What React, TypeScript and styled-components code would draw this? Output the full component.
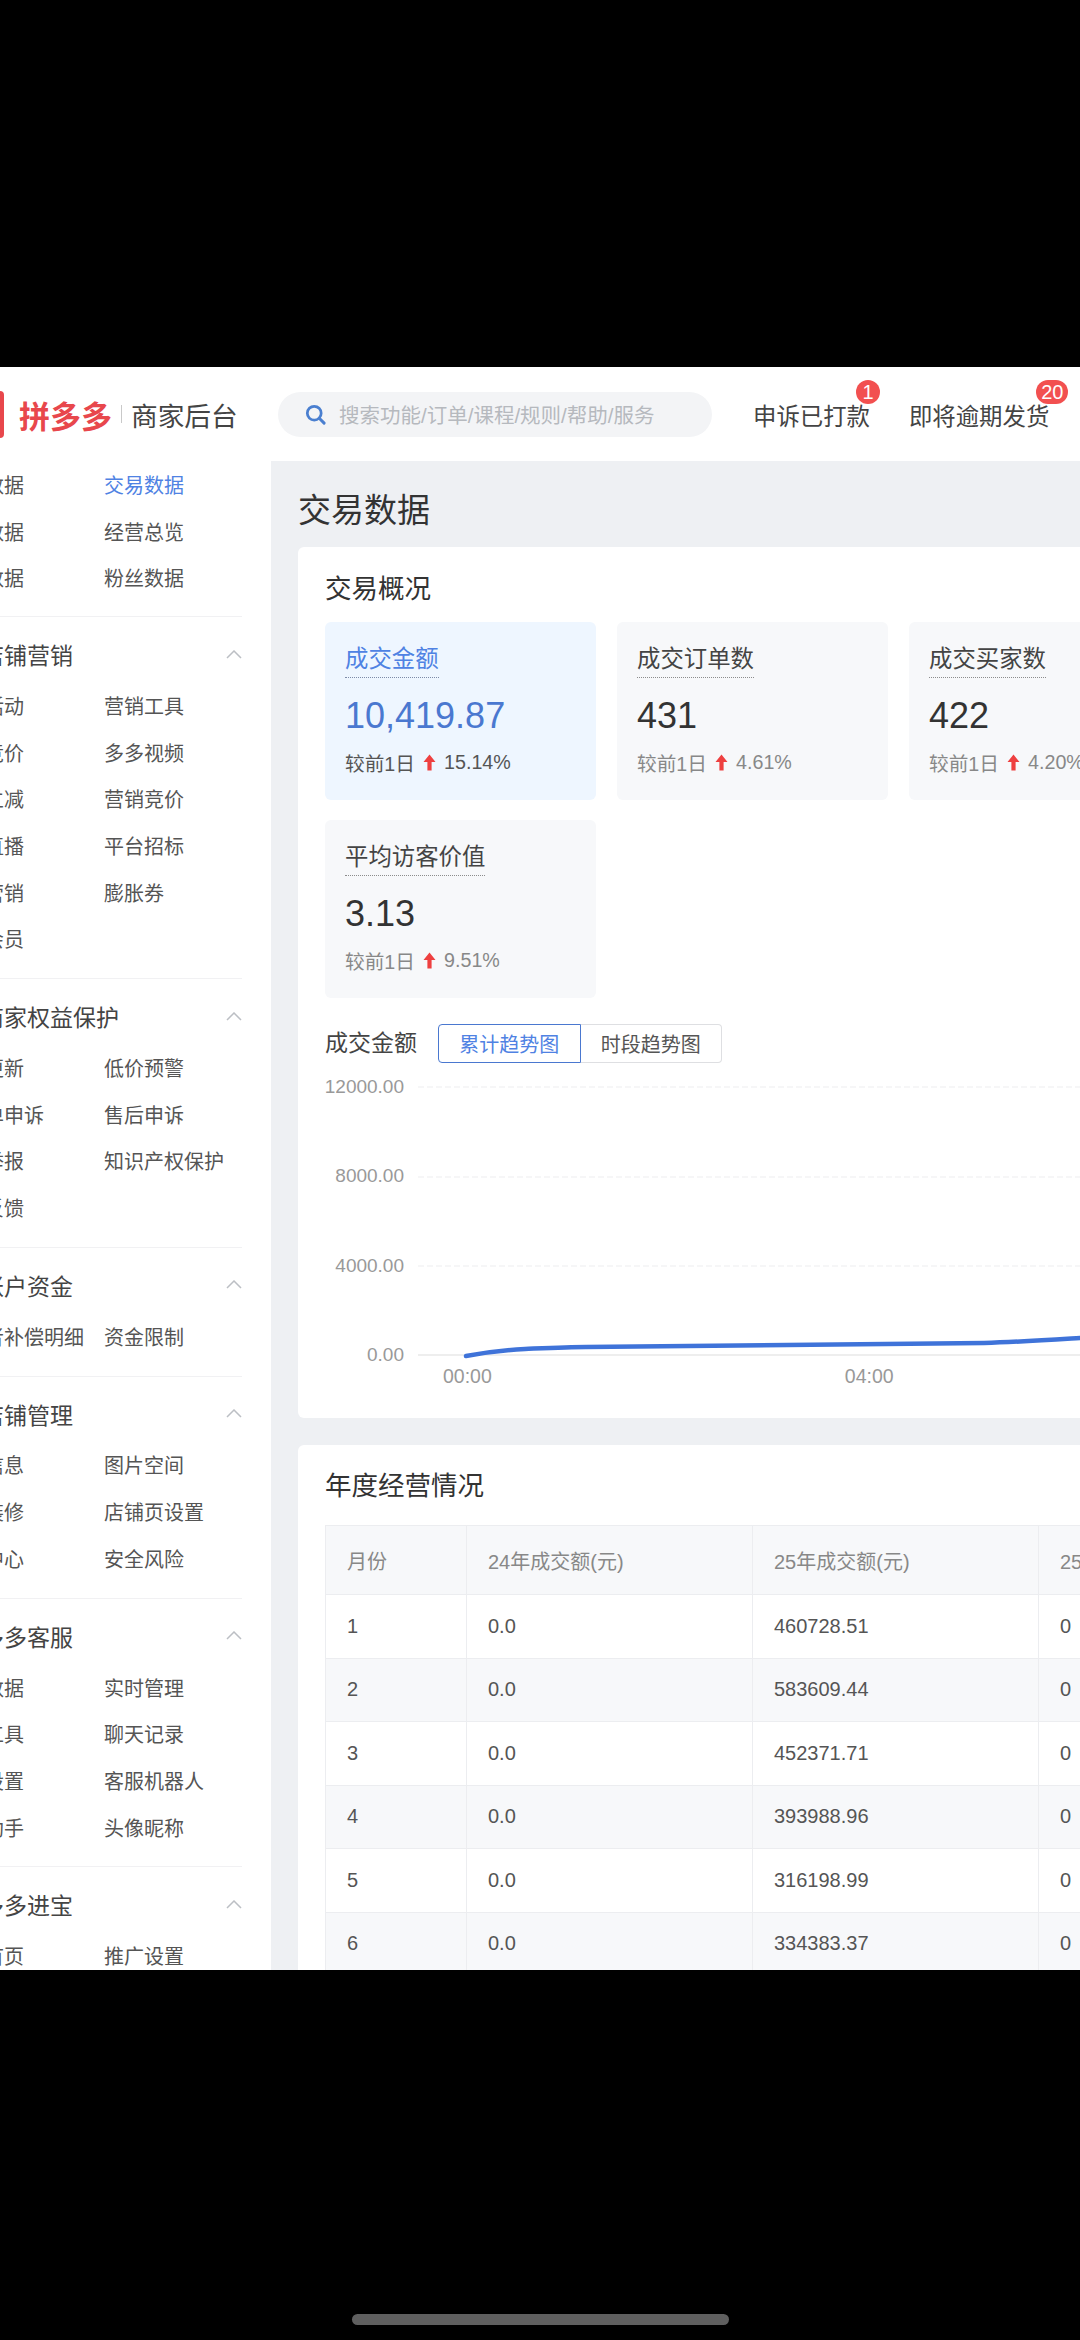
import React from 'react';
import styled, { createGlobalStyle } from 'styled-components';

const FONT = '"Liberation Sans", Arial, "Noto Sans CJK SC", sans-serif';

interface MenuGroup {
  title?: string;
  items: string[];
}

const menuGroups: MenuGroup[] = [
  {
    items: ['商品数据', '交易数据', '服务数据', '经营总览', '流量数据', '粉丝数据'],
  },
  {
    title: '店铺营销',
    items: [
      '营销活动',
      '营销工具',
      '限时竞价',
      '多多视频',
      '百亿立减',
      '营销竞价',
      '多多直播',
      '平台招标',
      '短信营销',
      '膨胀券',
      '店铺会员',
    ],
  },
  {
    title: '商家权益保护',
    items: [
      '规则更新',
      '低价预警',
      '违规单申诉',
      '售后申诉',
      '恶意举报',
      '知识产权保护',
      '意见反馈',
    ],
  },
  {
    title: '账户资金',
    items: ['消费者补偿明细', '资金限制'],
  },
  {
    title: '店铺管理',
    items: [
      '店铺信息',
      '图片空间',
      '店铺装修',
      '店铺页设置',
      '体检中心',
      '安全风险',
    ],
  },
  {
    title: '多多客服',
    items: [
      '客服数据',
      '实时管理',
      '客服工具',
      '聊天记录',
      '消息设置',
      '客服机器人',
      '智能助手',
      '头像昵称',
    ],
  },
  {
    title: '多多进宝',
    items: ['进宝首页', '推广设置'],
  },
];

const stats = [
  { label: '成交金额', value: '10,419.87', change: '15.14%', active: true },
  { label: '成交订单数', value: '431', change: '4.61%' },
  { label: '成交买家数', value: '422', change: '4.20%' },
  { label: '平均访客价值', value: '3.13', change: '9.51%' },
];

const yearRows = [
  ['1', '0.0', '460728.51', '0'],
  ['2', '0.0', '583609.44', '0'],
  ['3', '0.0', '452371.71', '0'],
  ['4', '0.0', '393988.96', '0'],
  ['5', '0.0', '316198.99', '0'],
  ['6', '0.0', '334383.37', '0'],
];

function UpArrow() {
  return (
    <ArrowIcon viewBox="0 0 13 17">
      <path d="M6.5 0.5 L12.5 8 H8.6 V16.5 H4.4 V8 H0.5 Z" fill="#ee4040" />
    </ArrowIcon>
  );
}

function TrendChart() {
  return (
    <ChartSvg viewBox="0 0 662 320">
      <g stroke="#f3f4f5" strokeWidth="1.5" strokeDasharray="6 3">
        <line x1="0" y1="18" x2="662" y2="18" />
        <line x1="0" y1="108" x2="662" y2="108" />
        <line x1="0" y1="197" x2="662" y2="197" />
      </g>
      <line x1="0" y1="286" x2="662" y2="286" stroke="#eeeeee" strokeWidth="2" />
      <path
        d="M48 287 C 70 283, 90 281, 107 280 C 130 279, 150 278, 168 278 L 566 274 C 600 273, 630 271, 662 269"
        fill="none"
        stroke="#3f73d9"
        strokeWidth="4.5"
        strokeLinecap="round"
      />
    </ChartSvg>
  );
}

function App() {
  return (
    <Page>
      <GlobalStyle />
      <Screen>
        <TopBar>
          <LogoMark />
          <LogoText>拼多多</LogoText>
          <LogoDivider />
          <LogoSub>商家后台</LogoSub>
          <SearchBox>
            <SearchIcon viewBox="0 0 20 20">
              <circle cx="8.8" cy="8.8" r="6.6" fill="none" stroke="#4a7fd0" strokeWidth="2.6" />
              <line x1="13.6" y1="13.6" x2="18.2" y2="18.2" stroke="#4a7fd0" strokeWidth="2.8" strokeLinecap="round" />
            </SearchIcon>
            <SearchHint>搜索功能/订单/课程/规则/帮助/服务</SearchHint>
          </SearchBox>
          <TopLink>
            申诉已打款
            <Badge>1</Badge>
          </TopLink>
          <TopLink>
            即将逾期发货
            <Badge $wide>20</Badge>
          </TopLink>
        </TopBar>

        <Body>
          <Sidebar>
            {menuGroups.map((group, i) => (
              <Group key={i}>
                {group.title && (
                  <GroupTitle>
                    <span>{group.title}</span>
                    <Chevron viewBox="0 0 16 9">
                      <polyline points="1,8 8,1 15,8" fill="none" stroke="#bcbfc4" strokeWidth="1.5" />
                    </Chevron>
                  </GroupTitle>
                )}
                <GroupItems>
                  {group.items.map((item) => (
                    <MenuItem key={item} $active={item === '交易数据'}>
                      {item}
                    </MenuItem>
                  ))}
                </GroupItems>
              </Group>
            ))}
          </Sidebar>

          <Main>
            <PageTitle>交易数据</PageTitle>

            <Panel>
              <PanelTitle>交易概况</PanelTitle>
              <StatGrid>
                {stats.map((stat) => (
                  <StatCard key={stat.label} $active={stat.active}>
                    <StatLabel $active={stat.active}>{stat.label}</StatLabel>
                    <StatValue $active={stat.active}>{stat.value}</StatValue>
                    <StatChange $active={stat.active}>
                      较前1日
                      <UpArrow />
                      {stat.change}
                    </StatChange>
                  </StatCard>
                ))}
              </StatGrid>

              <TrendHeader>
                <TrendLabel>成交金额</TrendLabel>
                <TrendToggle>
                  <ToggleButton $active>累计趋势图</ToggleButton>
                  <ToggleButton>时段趋势图</ToggleButton>
                </TrendToggle>
              </TrendHeader>

              <ChartArea>
                <YAxis>
                  <span>12000.00</span>
                  <span>8000.00</span>
                  <span>4000.00</span>
                  <span>0.00</span>
                </YAxis>
                <ChartBody>
                  <TrendChart />
                  <XAxis>
                    <span>00:00</span>
                    <span>04:00</span>
                  </XAxis>
                </ChartBody>
              </ChartArea>
            </Panel>

            <TablePanel>
              <TableTitle>年度经营情况</TableTitle>
              <YearTable>
                <thead>
                  <tr>
                    <HeadCell>月份</HeadCell>
                    <HeadCell>24年成交额(元)</HeadCell>
                    <HeadCell>25年成交额(元)</HeadCell>
                    <HeadCell>25年成交额同比</HeadCell>
                  </tr>
                </thead>
                <tbody>
                  {yearRows.map((row) => (
                    <YearRow key={row[0]}>
                      {row.map((cell, i) => (
                        <YearCell key={i}>{cell}</YearCell>
                      ))}
                    </YearRow>
                  ))}
                </tbody>
              </YearTable>
            </TablePanel>
          </Main>
        </Body>
      </Screen>
      <HomeBar />
    </Page>
  );
}

const GlobalStyle = createGlobalStyle`
  html, body {
    margin: 0;
    padding: 0;
    background: #000;
  }

  * {
    box-sizing: border-box;
  }
`;

const Page = styled.div`
  width: 1080px;
  height: 2340px;
  overflow: hidden;
  background: #000;
  font-family: ${FONT};
  padding-top: 367px;
`;

const Screen = styled.div`
  width: 1080px;
  height: 1603px;
  overflow: hidden;
  background: #eef0f3;
  display: flex;
  flex-direction: column;
`;

const HomeBar = styled.div`
  width: 377px;
  height: 11px;
  margin: 344px auto 0;
  border-radius: 6px;
  background: #5f5f5f;
`;

const TopBar = styled.header`
  flex: none;
  height: 94px;
  background: #fff;
  display: flex;
  align-items: center;
`;

const LogoMark = styled.div`
  flex: none;
  width: 4px;
  height: 47px;
  background: #e8474c;
  border-radius: 0 4px 4px 0;
`;

const LogoText = styled.div`
  margin-left: 15px;
  width: 93px;
  font-size: 31px;
  font-weight: 700;
  color: #e8474c;
  white-space: nowrap;
`;

const LogoDivider = styled.div`
  width: 1px;
  height: 18px;
  margin-left: 9px;
  background: #c9c9c9;
`;

const LogoSub = styled.div`
  margin-left: 9px;
  width: 107px;
  font-size: 26.7px;
  color: #444;
  white-space: nowrap;
`;

const SearchBox = styled.div`
  margin-left: 40px;
  width: 434px;
  height: 45px;
  border-radius: 23px;
  background: #f3f4f6;
  display: flex;
  align-items: center;
  padding-left: 27px;
`;

const SearchIcon = styled.svg`
  width: 21px;
  height: 21px;
  flex: none;
`;

const SearchHint = styled.span`
  margin-left: 13px;
  font-size: 20.5px;
  color: #b6b9be;
  white-space: nowrap;
`;

const TopLink = styled.div`
  position: relative;
  top: 1px;
  margin-left: 41px;
  font-size: 23.4px;
  color: #444;
  white-space: nowrap;

  & + & {
    margin-left: 39px;
  }
`;

const Badge = styled.span<{ $wide?: boolean }>`
  position: absolute;
  top: -18px;
  right: ${(p) => (p.$wide ? '-19px' : '-10px')};
  min-width: ${(p) => (p.$wide ? '32px' : '24px')};
  height: 24px;
  border-radius: 12px;
  background: #f25050;
  color: #fff;
  font-size: 20px;
  line-height: 24px;
  text-align: center;
`;

const Body = styled.div`
  flex: 1;
  min-height: 0;
  display: flex;
`;

const Sidebar = styled.aside`
  flex: none;
  width: 271px;
  background: #fff;
  overflow: hidden;
`;

const Group = styled.section`
  width: 242px;
  padding-bottom: 16px;
  border-bottom: 1px solid #f1f1f3;

  &:first-child {
    padding-bottom: 15px;
  }
`;

const GroupTitle = styled.div`
  height: 34px;
  margin-top: 20px;
  margin-bottom: 11px;
  margin-left: -19px;
  display: flex;
  align-items: center;
  justify-content: space-between;
  font-size: 23px;
  color: #444;
  white-space: nowrap;
`;

const Chevron = styled.svg`
  width: 16px;
  height: 9px;
  flex: none;
`;

const GroupItems = styled.div`
  margin-left: -56px;
  display: grid;
  grid-template-columns: 160px 138px;
  grid-auto-rows: 46.7px;
  align-items: center;
`;

const MenuItem = styled.div<{ $active?: boolean }>`
  font-size: 20px;
  color: ${(p) => (p.$active ? '#4f82e3' : '#555')};
  white-space: nowrap;
`;

const Main = styled.main`
  flex: none;
  width: 809px;
  padding-left: 27px;
  overflow: hidden;
`;

const PageTitle = styled.h1`
  margin: 0;
  height: 86px;
  line-height: 100px;
  font-size: 33px;
  font-weight: 400;
  color: #333;
`;

const Panel = styled.section`
  width: 1200px;
  height: 871px;
  padding: 0 27px;
  background: #fff;
  border-radius: 6px;
`;

const PanelTitle = styled.h2`
  margin: 0;
  height: 75px;
  line-height: 84px;
  font-size: 26.5px;
  font-weight: 400;
  color: #333;
`;

const StatGrid = styled.div`
  display: grid;
  grid-template-columns: repeat(3, 271px);
  grid-auto-rows: 178px;
  column-gap: 21px;
  row-gap: 20px;
`;

const StatCard = styled.div<{ $active?: boolean }>`
  padding: 20px 20px 0;
  border-radius: 6px;
  background: ${(p) => (p.$active ? '#eef6ff' : '#f7f8fa')};
`;

const StatLabel = styled.div<{ $active?: boolean }>`
  display: inline-block;
  height: 36px;
  line-height: 34px;
  font-size: 23.4px;
  color: ${(p) => (p.$active ? '#4f82e3' : '#444')};
  border-bottom: 1.5px dotted ${(p) => (p.$active ? '#7d8ba8' : '#8c8c8c')};
`;

const StatValue = styled.div<{ $active?: boolean }>`
  margin-top: 15px;
  height: 46px;
  line-height: 46px;
  font-size: 36px;
  color: ${(p) => (p.$active ? '#4a78d0' : '#333')};
`;

const StatChange = styled.div<{ $active?: boolean }>`
  margin-top: 8px;
  display: flex;
  align-items: center;
  height: 30px;
  font-size: 19.7px;
  color: ${(p) => (p.$active ? '#555' : '#888')};
  white-space: nowrap;
`;

const ArrowIcon = styled.svg`
  flex: none;
  width: 13px;
  height: 17px;
  margin: 0 8px;
`;

const TrendHeader = styled.div`
  margin-top: 26px;
  display: flex;
  align-items: center;
`;

const TrendLabel = styled.div`
  width: 113px;
  padding-bottom: 5px;
  font-size: 23px;
  color: #444;
`;

const TrendToggle = styled.div`
  display: flex;
  width: 284px;
  height: 39px;
`;

const ToggleButton = styled.div<{ $active?: boolean }>`
  flex: 1;
  display: flex;
  align-items: center;
  justify-content: center;
  font-size: 20px;
  color: ${(p) => (p.$active ? '#4f82e3' : '#555')};
  border: 1.5px solid ${(p) => (p.$active ? '#4a78d0' : '#dedfe2')};
  border-radius: ${(p) => (p.$active ? '4px 0 0 4px' : '0 4px 4px 0')};
  ${(p) => !p.$active && 'border-left: none;'}
`;

const ChartArea = styled.div`
  margin-top: 6px;
  display: flex;
`;

const YAxis = styled.div`
  flex: none;
  width: 79px;
  height: 304px;
  display: flex;
  flex-direction: column;
  justify-content: space-between;
  align-items: flex-end;
  font-size: 19px;
  line-height: 36px;
  color: #999;
`;

const ChartBody = styled.div`
  margin-left: 14px;
  width: 662px;
`;

const ChartSvg = styled.svg`
  display: block;
  width: 662px;
  height: 320px;
  margin-bottom: -24px;
`;

const XAxis = styled.div`
  display: flex;
  gap: 353px;
  padding-left: 25px;
  font-size: 19.5px;
  color: #999;
`;

const TablePanel = styled.section`
  width: 1200px;
  margin-top: 27px;
  height: 700px;
  padding: 0 27px;
  background: #fff;
  border-radius: 6px 6px 0 0;
`;

const TableTitle = styled.h2`
  margin: 0;
  height: 80px;
  line-height: 82px;
  font-size: 26.5px;
  font-weight: 400;
  color: #333;
`;

const YearTable = styled.table`
  border-collapse: collapse;
  table-layout: fixed;
  width: 1000px;
  font-size: 20px;

  & th:nth-child(1) {
    width: 141px;
  }

  & th:nth-child(2),
  & th:nth-child(3) {
    width: 286px;
  }
`;

const HeadCell = styled.th`
  height: 69px;
  padding: 0 0 0 21px;
  font-weight: 400;
  text-align: left;
  color: #888;
  background: #f7f8fa;
  border: 1px solid #ecedf0;
  white-space: nowrap;
`;

const YearRow = styled.tr`
  height: 63.5px;

  &:nth-child(even) {
    background: #f7f8fa;
  }
`;

const YearCell = styled.td`
  padding: 0 0 0 21px;
  color: #555;
  border: 1px solid #ecedf0;
`;

export default App;
